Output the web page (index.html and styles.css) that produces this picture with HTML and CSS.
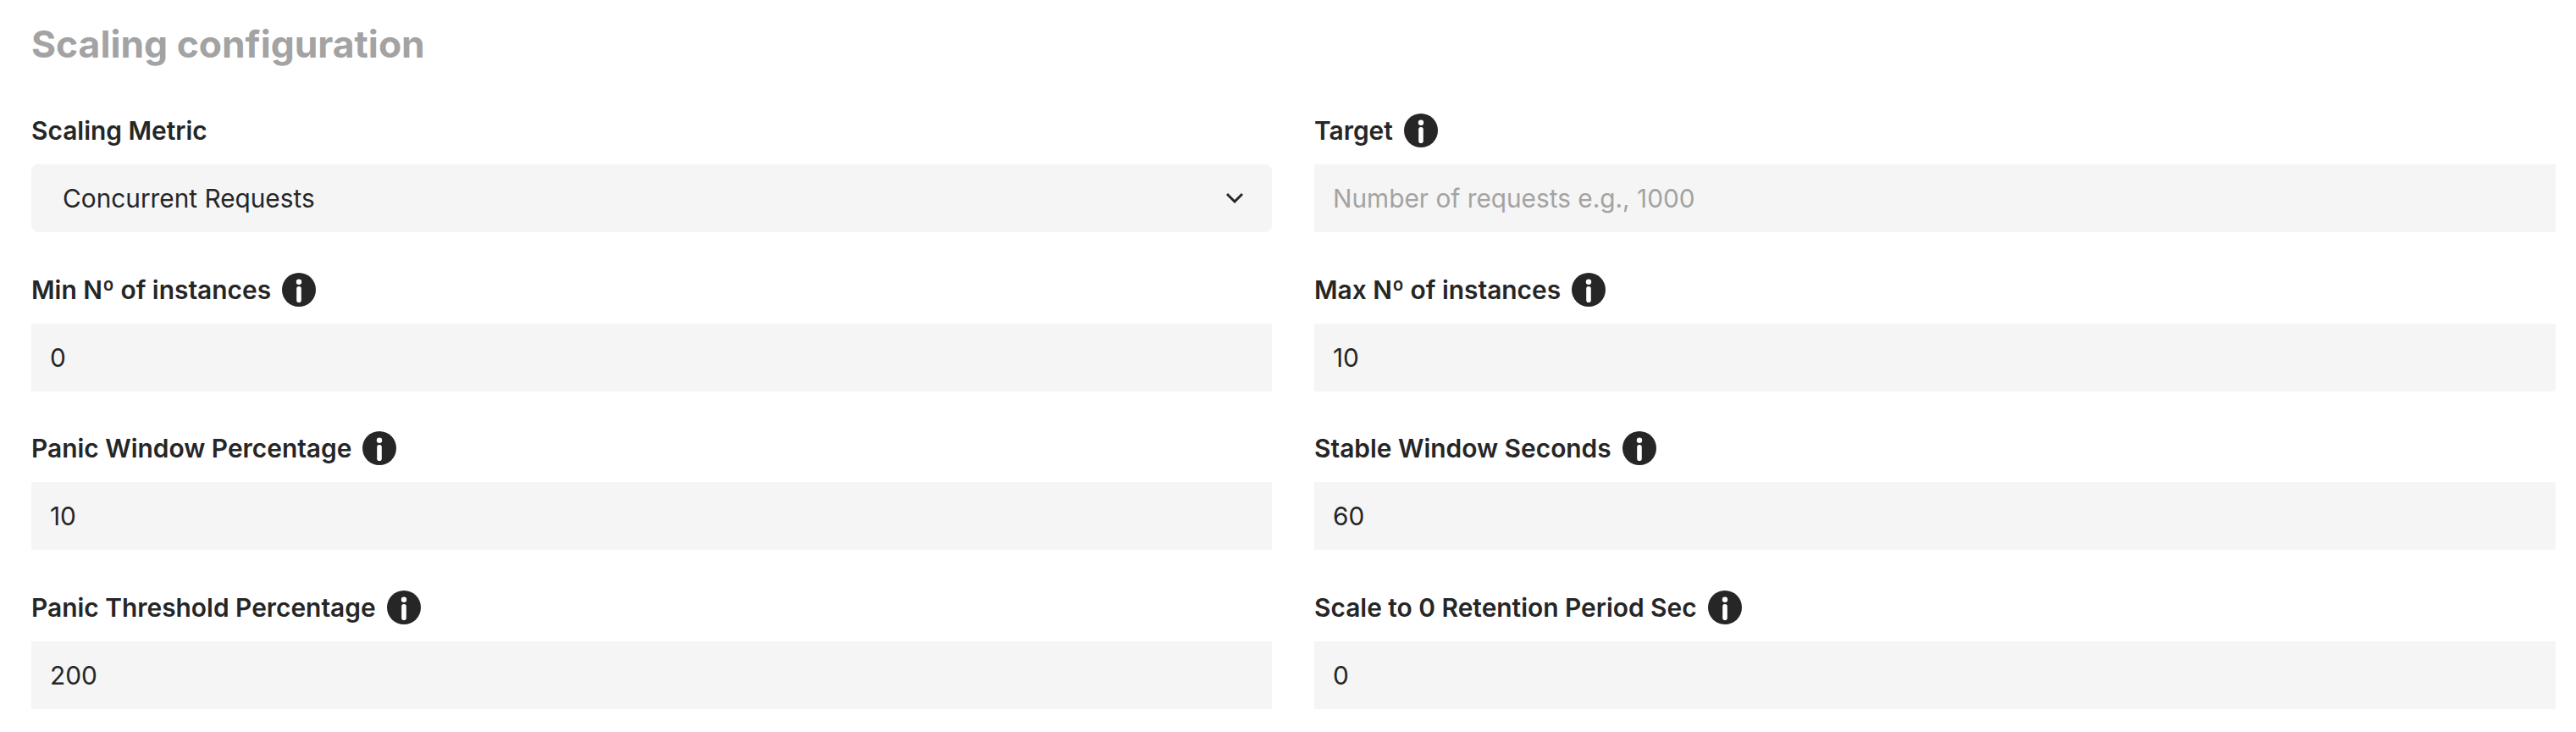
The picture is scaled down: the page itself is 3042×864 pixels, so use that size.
FILE: index.html
```html
<!DOCTYPE html>
<html lang="en">
<head>
    <meta charset="UTF-8">
    <meta name="viewport" content="width=device-width, initial-scale=1.0">
    <title>Scaling configuration</title>
    <link rel="stylesheet" href="styles.css">
</head>
<body>
    <svg class="iconDefs" width="0" height="0">
        <symbol id="infoIcon" viewBox="0 0 40 40">
            <circle cx="20" cy="20" r="20" fill="#262626"/>
            <circle cx="20" cy="10.8" r="3.2" fill="#fff"/>
            <rect x="17.2" y="16" width="5.6" height="19" rx="2.8" fill="#fff"/>
        </symbol>
    </svg>
    <div class="container">
        <h2 class="titulo">Scaling configuration</h2>
        <div class="grade">
            <div class="campo">
                <label class="rotulo">Scaling Metric</label>
                <div class="seletor">
                    <span>Concurrent Requests</span>
                    <svg class="seta" viewBox="0 0 20 14"><path d="M1 2 10 11 19 2" fill="none" stroke="#262626" stroke-width="3"/></svg>
                </div>
            </div>
            <div class="campo">
                <label class="rotulo">Target <svg class="info"><use href="#infoIcon"/></svg></label>
                <input class="entrada" type="text" placeholder="Number of requests e.g., 1000">
            </div>
            <div class="campo">
                <label class="rotulo">Min Nº of instances <svg class="info"><use href="#infoIcon"/></svg></label>
                <input class="entrada" type="text" value="0">
            </div>
            <div class="campo">
                <label class="rotulo">Max Nº of instances <svg class="info"><use href="#infoIcon"/></svg></label>
                <input class="entrada" type="text" value="10">
            </div>
            <div class="campo">
                <label class="rotulo">Panic Window Percentage <svg class="info"><use href="#infoIcon"/></svg></label>
                <input class="entrada" type="text" value="10">
            </div>
            <div class="campo">
                <label class="rotulo">Stable Window Seconds <svg class="info"><use href="#infoIcon"/></svg></label>
                <input class="entrada" type="text" value="60">
            </div>
            <div class="campo">
                <label class="rotulo">Panic Threshold Percentage <svg class="info"><use href="#infoIcon"/></svg></label>
                <input class="entrada" type="text" value="200">
            </div>
            <div class="campo">
                <label class="rotulo">Scale to 0 Retention Period Sec <svg class="info"><use href="#infoIcon"/></svg></label>
                <input class="entrada" type="text" value="0">
            </div>
        </div>
    </div>
</body>
</html>
```

FILE: styles.css
```css
body {
    margin: 0;
    background: #fff;
    font-family: Inter, "Liberation Sans", sans-serif;
    color: #262626;
}
.iconDefs {
    position: absolute;
}
.container {
    padding: 28px 24px 0 37px;
}
.titulo {
    margin: 0 0 58px;
    font-size: 44.4px;
    line-height: 48px;
    font-weight: 700;
    color: #a3a3a3;
}
.grade {
    display: grid;
    grid-template-columns: 1465px 1fr;
    column-gap: 50px;
    row-gap: 47.5px;
}
.campo {
    display: flex;
    flex-direction: column;
    min-width: 0;
}
.rotulo {
    display: flex;
    align-items: center;
    gap: 13px;
    height: 40px;
    margin-bottom: 20px;
    font-size: 29.9px;
    font-weight: 600;
}
.info {
    width: 40px;
    height: 40px;
}
.seletor {
    display: flex;
    justify-content: space-between;
    align-items: center;
    height: 80px;
    padding: 0 34px 0 37px;
    background: #f5f5f5;
    border-radius: 8px;
    font-size: 29.8px;
}
.seta {
    width: 20px;
    height: 14px;
}
.entrada {
    height: 80px;
    padding: 0 22px;
    border: none;
    border-radius: 0;
    background: #f5f5f5;
    font-family: inherit;
    font-size: 29.8px;
    color: #262626;
}
.entrada::placeholder {
    color: #a3a3a3;
    opacity: 1;
}
```
